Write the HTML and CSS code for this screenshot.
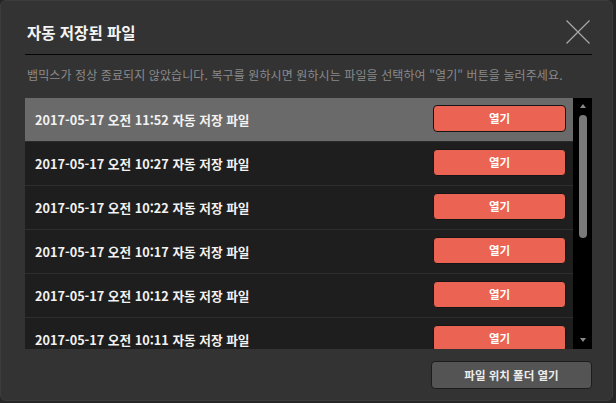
FILE: index.html
```html
<!DOCTYPE html>
<html lang="ko">
<head>
<meta charset="utf-8">
<title>자동 저장된 파일</title>
<link rel="stylesheet" href="styles.css">
</head>
<body>
<div class="dialog">
  <div class="header">
    <h1 class="title">자동 저장된 파일</h1>
    <svg class="close" width="24" height="24" viewBox="0 0 24 24"><path d="M0.5 0.5 L23.5 23.5 M23.5 0.5 L0.5 23.5" stroke="#a8a8a8" stroke-width="1.2" fill="none"/></svg>
  </div>
  <p class="desc">뱁믹스가 정상 종료되지 않았습니다. 복구를 원하시면 원하시는 파일을 선택하여 "열기" 버튼을 눌러주세요.</p>
  <div class="list">
    <div class="rows">
      <div class="row selected"><span class="name">2017-05-17 오전 11:52 자동 저장 파일</span><button class="open">열기</button></div>
      <div class="row"><span class="name">2017-05-17 오전 10:27 자동 저장 파일</span><button class="open">열기</button></div>
      <div class="row"><span class="name">2017-05-17 오전 10:22 자동 저장 파일</span><button class="open">열기</button></div>
      <div class="row"><span class="name">2017-05-17 오전 10:17 자동 저장 파일</span><button class="open">열기</button></div>
      <div class="row"><span class="name">2017-05-17 오전 10:12 자동 저장 파일</span><button class="open">열기</button></div>
      <div class="row"><span class="name">2017-05-17 오전 10:11 자동 저장 파일</span><button class="open">열기</button></div>
    </div>
    <div class="scrollbar">
      <div class="arrow up"></div>
      <div class="track"><div class="thumb"></div></div>
      <div class="arrow down"></div>
    </div>
  </div>
  <div class="footer">
    <button class="folder">파일 위치 폴더 열기</button>
  </div>
</div>
</body>
</html>
```
FILE: styles.css
```css
html, body {
  margin: 0;
  padding: 0;
  background: #262626;
  width: 616px;
  height: 403px;
  overflow: hidden;
}
body {
  font-family: "Noto Sans CJK KR", "Noto Sans", sans-serif;
  color: #f0f0f0;
}
.dialog {
  box-sizing: border-box;
  width: 613px;
  height: 401px;
  background: #333333;
  border: 1px solid #3c3c3c;
  border-radius: 6px;
  padding: 0 20px 0 24px;
}
.header {
  box-sizing: border-box;
  height: 54px;
  padding-top: 9px;
  display: flex;
  align-items: center;
  justify-content: space-between;
  border-bottom: 1px solid #050505;
}
.title {
  margin: 0 0 0 2px;
  font-size: 15.5px;
  font-weight: 700;
  color: #f4f4f4;
  line-height: 20px;
}
.close {
  display: block;
  margin-right: 2px;
  margin-bottom: 1px;
}
.desc {
  margin: 12px 0 15px 2px;
  font-size: 12px;
  letter-spacing: 0.1px;
  line-height: 16px;
  color: #8a8a8a;
  white-space: nowrap;
}
.list {
  display: flex;
  height: 251px;
  overflow: hidden;
}
.rows {
  flex: 1;
  background: #1e1e1e;
}
.row {
  box-sizing: border-box;
  height: 44px;
  border-bottom: 1px solid #2e2e2e;
  display: flex;
  align-items: center;
  justify-content: space-between;
  padding: 0 7px 0 10px;
}
.row.selected {
  background: #6a6a6a;
  border-bottom-color: #2a2a2a;
}
.name {
  font-size: 12.7px;
  font-weight: 700;
  color: #f2f2f2;
}
.open {
  box-sizing: border-box;
  width: 133px;
  height: 27px;
  margin-bottom: 3px;
  background: #eb6352;
  border: 1px solid #151515;
  border-radius: 4px;
  color: #ffffff;
  font-family: inherit;
  font-size: 11.5px;
  font-weight: 700;
  padding: 0;
}
.scrollbar {
  width: 19px;
  background: #000;
  display: flex;
  flex-direction: column;
  align-items: center;
}
.arrow {
  width: 0;
  height: 0;
  border-left: 3.5px solid transparent;
  border-right: 3.5px solid transparent;
}
.arrow.up {
  margin-top: 6px;
  border-bottom: 4px solid #8a8a8a;
}
.arrow.down {
  margin-bottom: 7px;
  border-top: 4px solid #8a8a8a;
}
.track {
  flex: 1;
  width: 8px;
  padding-top: 7px;
}
.thumb {
  width: 8px;
  height: 123px;
  background: #7a7a7a;
  border-radius: 4px;
}
.footer {
  display: flex;
  justify-content: flex-end;
  padding-top: 12px;
}
.folder {
  box-sizing: border-box;
  width: 161px;
  height: 28px;
  background: #545454;
  border: 1px solid #1c1c1c;
  border-radius: 4px;
  color: #ececec;
  font-family: inherit;
  font-size: 11.5px;
  font-weight: 700;
  padding: 0;
}
```
